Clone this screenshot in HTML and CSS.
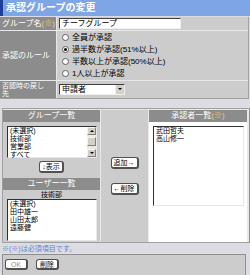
FILE: index.html
```html
<!DOCTYPE html>
<html lang="ja">
<head>
<meta charset="UTF-8" />
<title>承認グループの変更</title>
<link rel="stylesheet" href="styles.css">
</head>
<body>

<div class="title">承認グループの変更</div>

<div class="form">
  <div class="label">グループ名<span class="req">(※)</span></div>
  <div class="value"><div class="input">チーフグループ</div></div>

  <div class="label">承認のルール</div>
  <div class="value rules">
    <div class="radio"><span class="dot"></span>全員が承認</div>
    <div class="radio"><span class="dot on"></span>過半数が承認(51%以上)</div>
    <div class="radio"><span class="dot"></span>半数以上が承認(50%以上)</div>
    <div class="radio"><span class="dot"></span>1人以上が承認</div>
  </div>

  <div class="label wrap">否認時の戻し<br>先</div>
  <div class="value"><div class="select"><span>申請者</span><span class="arrow"></span></div></div>
</div>

<div class="panel">
  <div class="col left">
    <div class="head">グループ一覧</div>
    <div class="listbox groups">
      <div class="items">
        <div>(未選択)</div>
        <div>技術部</div>
        <div>営業部</div>
        <div>すべて</div>
      </div>
      <div class="scroll">
        <span class="sbtn up"></span>
        <span class="track"><span class="thumb"></span></span>
        <span class="sbtn down"></span>
      </div>
    </div>
    <div class="center"><span class="btn">↓表示</span></div>
    <div class="head users-head">ユーザー一覧</div>
    <div class="dept">技術部</div>
    <div class="listbox users">
      <div class="items">
        <div>(未選択)</div>
        <div>田中雄一</div>
        <div>山田太郎</div>
        <div>遠藤健</div>
      </div>
    </div>
  </div>

  <div class="col middle">
    <span class="btn">追加→</span>
    <span class="btn">←削除</span>
  </div>

  <div class="col right">
    <div class="head">承認者一覧<span class="req">(※)</span></div>
    <div class="listbox approvers">
      <div class="items">
        <div>武田哲夫</div>
        <div>高山修一</div>
      </div>
    </div>
  </div>
</div>

<p class="note">※(※)は必須項目です。</p>

<div class="actions">
  <span class="btn off">OK</span>
  <span class="btn">削除</span>
</div>

</body>
</html>
```

FILE: styles.css
```css
body {
  margin: 0;
  background: #dcdce2;
  font-family: "Liberation Sans", "Noto Sans CJK JP", sans-serif;
  font-size: 8px;
  line-height: 9px;
  color: #000;
}
.title {
  height: 16px;
  line-height: 16px;
  background: #7ea6e6;
  border-left: 3px solid #1c3f99;
  padding-left: 3px;
  color: white;
  font-size: 10px;
  font-weight: bold;
}
.req {
  color: #e2d27a;
}

/* form rows */
.form {
  display: grid;
  grid-template-columns: 56px 1fr;
  grid-template-rows: 13px 49px 17px;
  gap: 1px;
  width: 248px;
  margin-top: 1px;
  background: #e8e8e8;
  border-right: 1px solid #a0a0a0;
  border-bottom: 1px solid #a0a0a0;
}
.label {
  background: #8c8c8c;
  color: white;
  padding: 0 2px;
  display: flex;
  align-items: center;
  white-space: nowrap;
}
.label.wrap {
  display: block;
  padding-top: 1px;
  font-size: 7px;
  line-height: 8px;
}
.value {
  background: #cccccc;
  padding-left: 2px;
  display: flex;
  align-items: center;
}
.input {
  width: 116px;
  height: 9px;
  line-height: 9px;
  padding: 0 2px;
  background: white;
  border-top: 1px solid #404040;
  border-left: 1px solid #404040;
  border-right: 1px solid #f0f0f0;
  border-bottom: 1px solid #f0f0f0;
}
.rules {
  flex-direction: column;
  align-items: flex-start;
  justify-content: center;
  padding-left: 5px;
}
.radio {
  display: flex;
  align-items: center;
  gap: 3px;
  height: 12px;
}
.dot {
  width: 5px;
  height: 5px;
  border-radius: 50%;
  background: white;
  border: 1px solid #606060;
  position: relative;
}
.dot.on::after {
  content: "";
  position: absolute;
  left: 1px;
  top: 1px;
  width: 3px;
  height: 3px;
  border-radius: 50%;
  background: #000;
}
.select {
  width: 62px;
  height: 9px;
  background: white;
  border-top: 1px solid #404040;
  border-left: 1px solid #404040;
  border-right: 1px solid #f0f0f0;
  border-bottom: 1px solid #f0f0f0;
  display: flex;
  justify-content: space-between;
  padding-left: 2px;
  line-height: 9px;
}
.arrow {
  width: 8px;
  background: #d4d0c8;
  border-left: 1px solid #f0f0f0;
  position: relative;
}
.arrow::after {
  content: "";
  position: absolute;
  left: 2px;
  top: 3px;
  border-left: 2px solid transparent;
  border-right: 2px solid transparent;
  border-top: 2px solid #000;
}

/* selection panel */
.panel {
  display: grid;
  grid-template-columns: 97px 47px 98px;
  gap: 1px;
  width: 246px;
  margin: 9px 0 0 2px;
  padding-top: 1px;
  background: #e8e8e8;
  border: 1px solid #a0a0a0;
  border-right-color: #909090;
}
.col {
  background: #cccccc;
  height: 132px;
}
.col.right {
  background: white;
}
.head {
  height: 12px;
  line-height: 12px;
  background: #8c8c8c;
  color: white;
  text-align: center;
}
.listbox {
  background: white;
  border-top: 1px solid #303030;
  border-left: 1px solid #303030;
  border-right: 1px solid #e8e8e8;
  border-bottom: 1px solid #e8e8e8;
  display: flex;
}
.items {
  flex: 1;
  padding: 0 2px;
  font-size: 7px;
  line-height: 8px;
}
.groups {
  height: 30px;
  margin: 4px 3px 0 4px;
}
.scroll {
  width: 9px;
  display: flex;
  flex-direction: column;
}
.sbtn {
  height: 8px;
  background: #d4d0c8;
  border: 1px solid #808080;
  border-top-color: #f4f4f4;
  border-left-color: #f4f4f4;
  box-sizing: border-box;
  position: relative;
}
.sbtn::after {
  content: "";
  position: absolute;
  left: 2px;
  top: 2px;
  border-left: 2px solid transparent;
  border-right: 2px solid transparent;
}
.sbtn.up::after {
  border-bottom: 2px solid #000;
}
.sbtn.down::after {
  border-top: 2px solid #000;
}
.track {
  flex: 1;
  background: #ece9e4;
  padding-top: 2px;
}
.thumb {
  display: block;
  height: 9px;
  background: #d4d0c8;
  border: 1px solid #808080;
  border-top-color: #f4f4f4;
  border-left-color: #f4f4f4;
  box-sizing: border-box;
}
.center {
  text-align: center;
  margin-top: 3px;
}
.btn {
  display: inline-block;
  height: 9px;
  line-height: 9px;
  padding: 0 2px;
  background: white;
  border: 1px solid #505050;
  border-right-width: 2px;
  border-bottom-width: 2px;
  border-radius: 3px;
  font-size: 7px;
}
.users-head {
  margin-top: 5px;
}
.dept {
  text-align: center;
  height: 9px;
  line-height: 9px;
  font-size: 7px;
}
.users {
  height: 40px;
  margin: 0 3px 0 4px;
}
.middle {
  display: flex;
  flex-direction: column;
  align-items: center;
  gap: 14px;
  padding-top: 47px;
  box-sizing: border-box;
}
.approvers {
  height: 78px;
  margin: 4px 3px 0 4px;
}

.note {
  margin: 2px 0 0 2px;
  height: 8px;
  line-height: 8px;
  color: #5b86d8;
  font-size: 7px;
}
.actions {
  width: 238px;
  height: 15px;
  margin: 1px 0 0 2px;
  padding: 3px 2px;
  background: #cccccc;
  border: 1px solid #909090;
  display: flex;
  gap: 8px;
}
.actions .btn {
  width: 16px;
  text-align: center;
  height: 8px;
  margin-top: 1px;
}
.btn.off {
  color: #909090;
}
```
